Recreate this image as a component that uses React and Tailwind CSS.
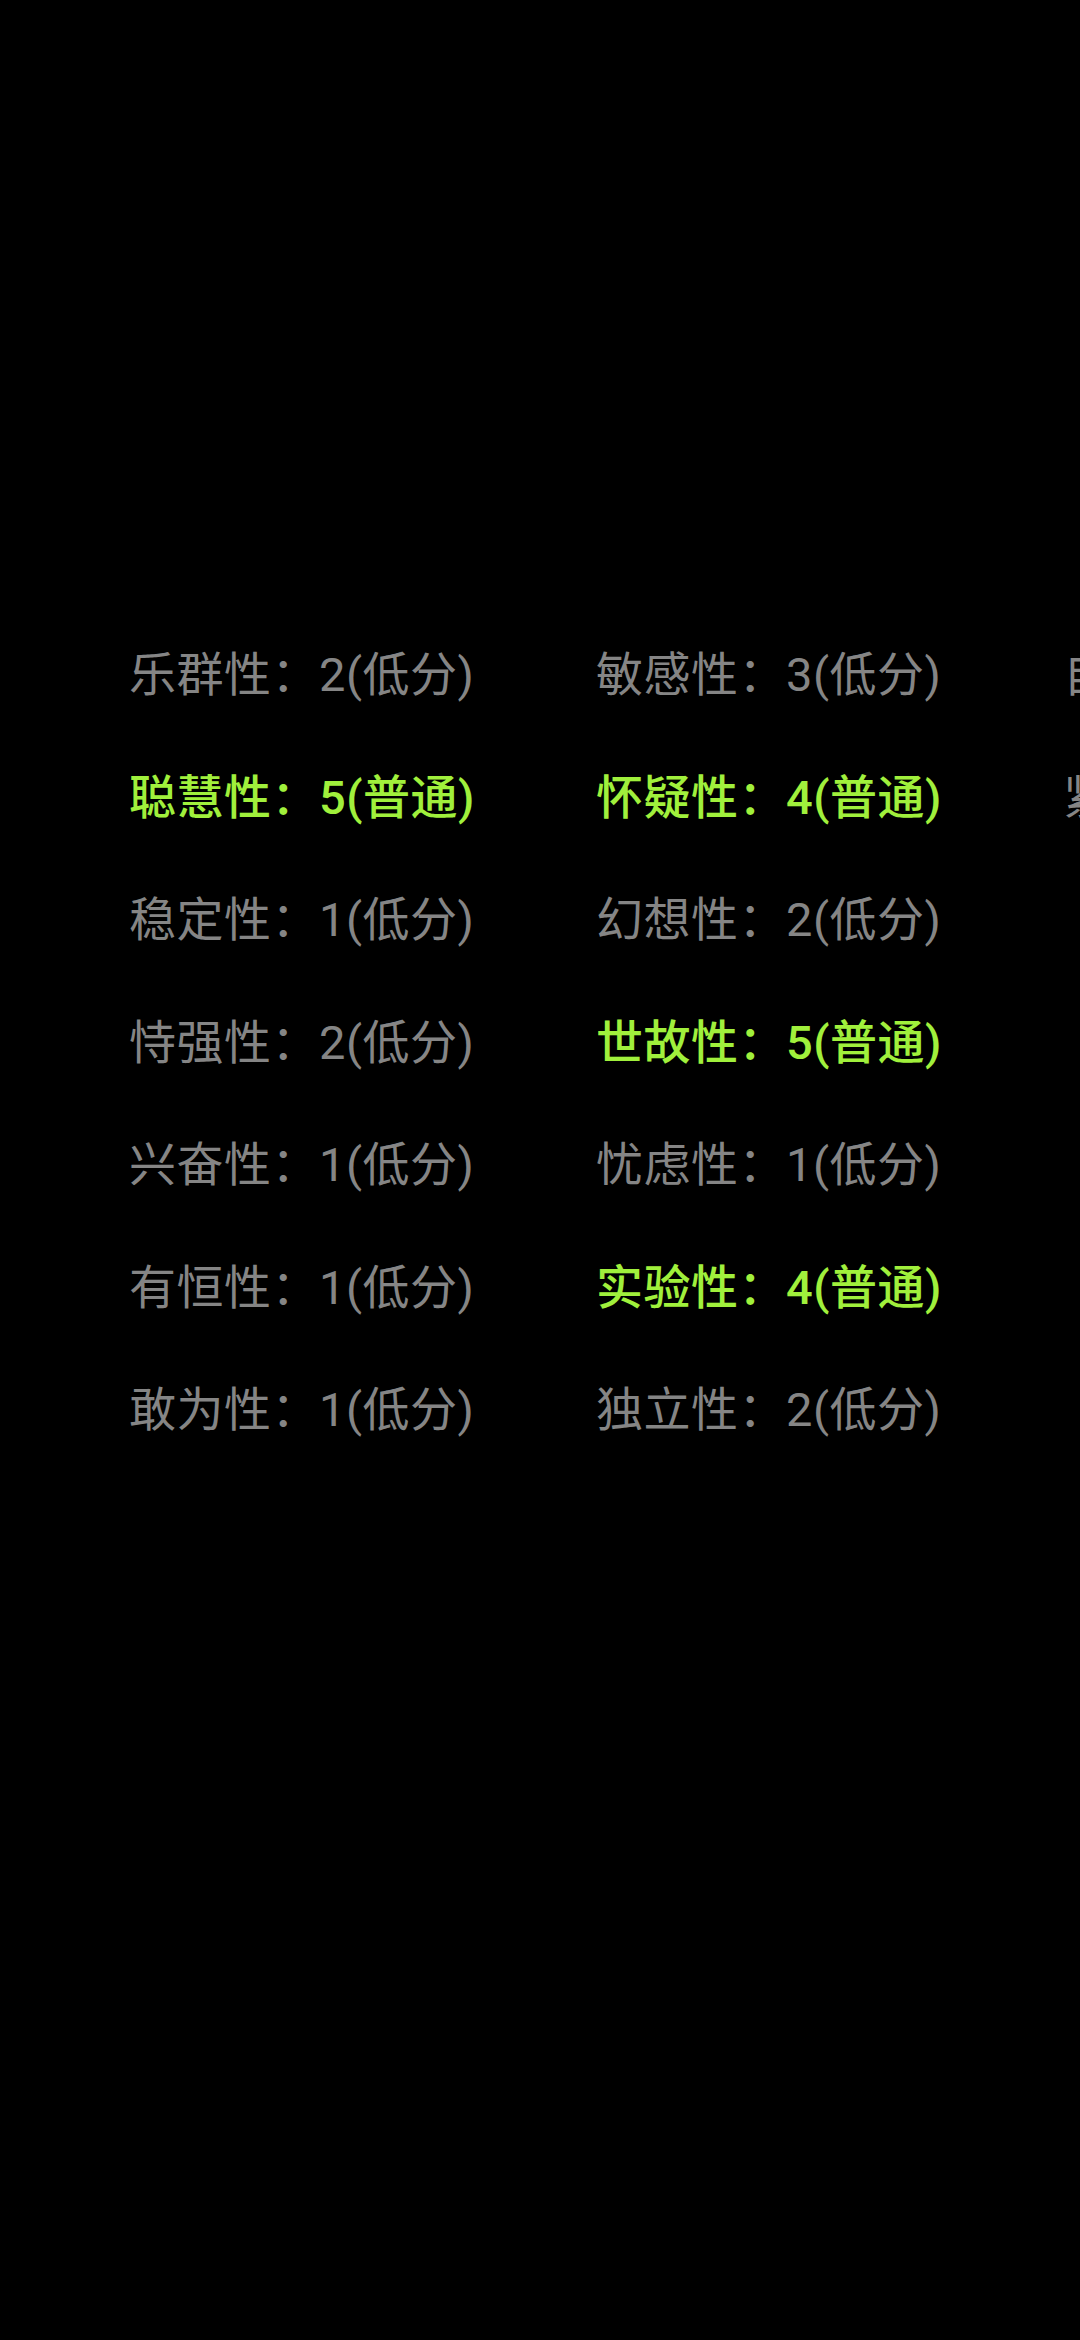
const columns = [
  [
    ['乐群性', 2, false],
    ['聪慧性', 5, true],
    ['稳定性', 1, false],
    ['恃强性', 2, false],
    ['兴奋性', 1, false],
    ['有恒性', 1, false],
    ['敢为性', 1, false],
  ],
  [
    ['敏感性', 3, false],
    ['怀疑性', 4, true],
    ['幻想性', 2, false],
    ['世故性', 5, true],
    ['忧虑性', 1, false],
    ['实验性', 4, true],
    ['独立性', 2, false],
  ],
  [
    ['自律性', 3, false],
    ['紧张性', 2, false],
  ],
]

export default function App() {
  return (
    <div
      className="w-[1080px] min-h-[2340px] bg-black overflow-hidden"
      style={{ fontFamily: 'Roboto, "Noto Sans CJK SC", sans-serif' }}
    >
      <div className="flex pt-[614px] pl-[129px]">
        {columns.map((col, i) => (
          <div key={i} className="w-[467px] shrink-0 flex flex-col">
            {col.map(([name, score, normal]) => (
              <div
                key={name}
                className={
                  normal
                    ? 'h-[122.5px] leading-[122.5px] text-[47px] tracking-[0.5px] whitespace-nowrap text-[#a0f03c] font-medium'
                    : 'h-[122.5px] leading-[122.5px] text-[47px] tracking-[0.5px] whitespace-nowrap text-[#858585]'
                }
              >
                {name}：{score}({normal ? '普通' : '低分'})
              </div>
            ))}
          </div>
        ))}
      </div>
    </div>
  )
}
